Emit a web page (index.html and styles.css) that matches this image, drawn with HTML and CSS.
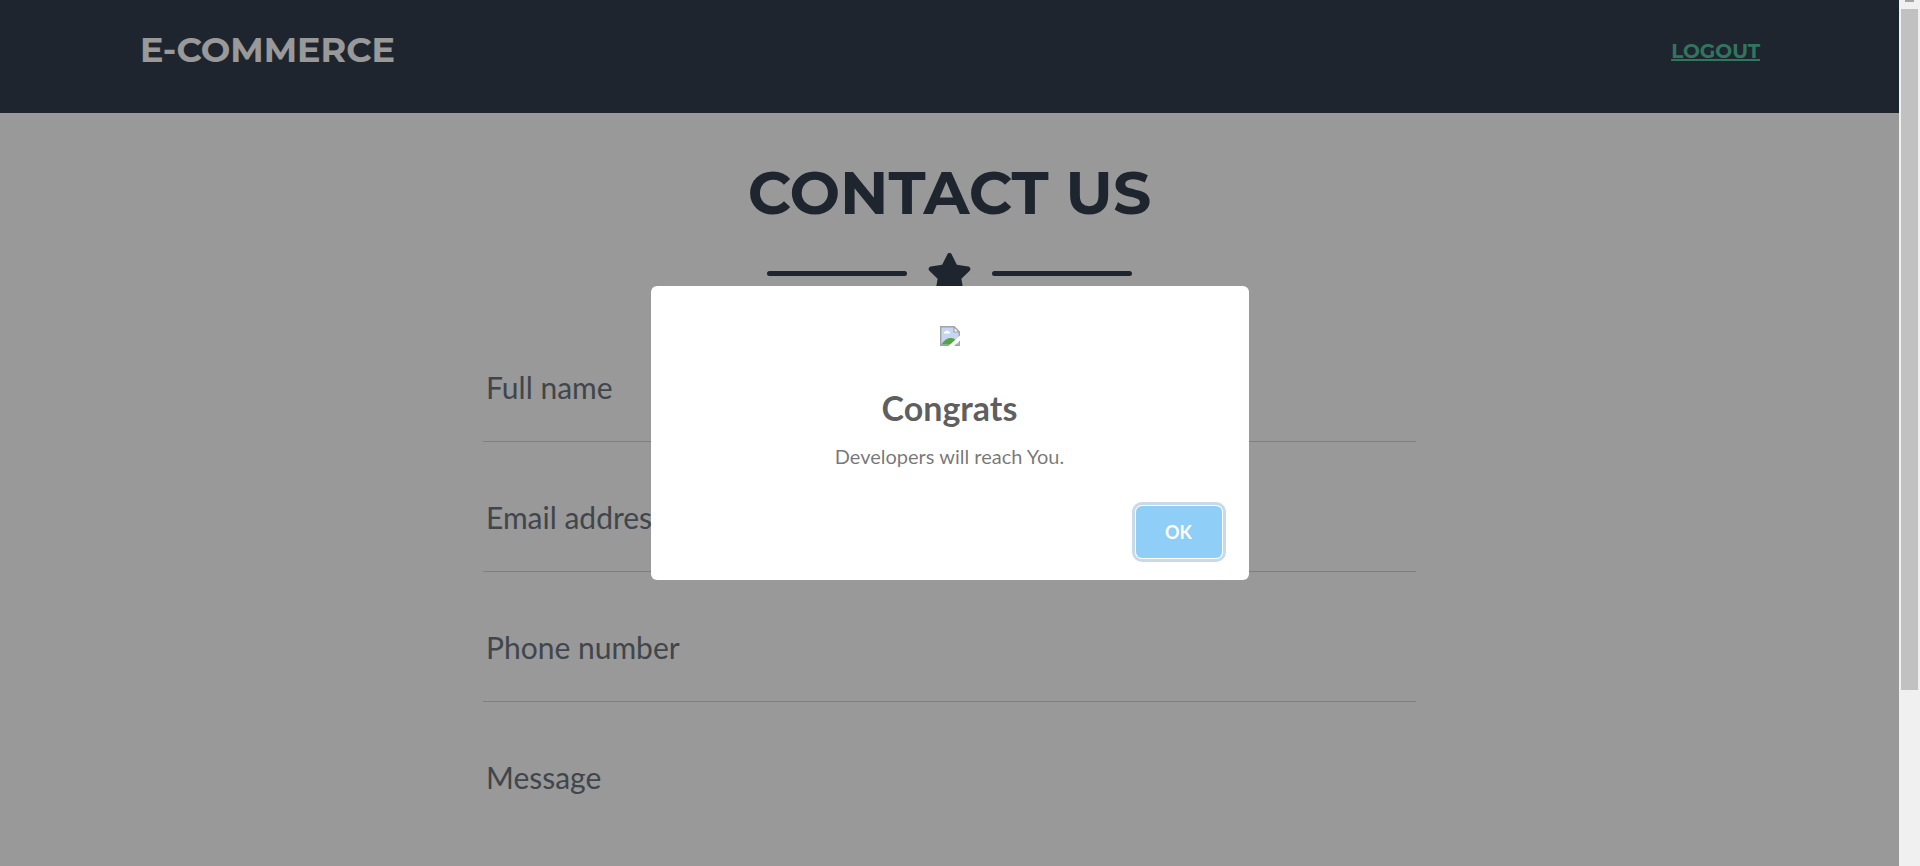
FILE: index.html
```
<!DOCTYPE html>
<html lang="en">
<head>
<meta charset="utf-8">
<meta name="viewport" content="width=device-width, initial-scale=1">
<title>Contact Us</title>
<link rel="stylesheet" href="styles.css">
</head>
<body>
<div class="viewport">
  <div class="page">
    <header class="navbar">
      <div class="navbar-inner">
        <span class="brand">E-COMMERCE</span>
        <a class="logout" href="#">LOGOUT</a>
      </div>
    </header>
    <main class="contact">
      <h1 class="contact-title">CONTACT US</h1>
      <div class="divider">
        <span class="divider-line"></span>
        <svg class="divider-star" viewBox="0 0 576 512" aria-hidden="true"><path fill="currentColor" d="M259.3 17.8L194 150.2 47.900 171.500c-26.200 3.800-36.700 36.100-17.700 54.600l105.700 103-25 145.500c-4.500 26.300 23.200 46 46.400 33.700L288 439.600l130.700 68.700c23.200 12.200 50.900-7.400 46.400-33.700l-25-145.500 105.700-103c19-18.500 8.500-50.800-17.700-54.600L382 150.200 316.700 17.800c-11.700-23.600-45.600-23.900-57.400 0z"/></svg>
        <span class="divider-line"></span>
      </div>
      <form class="form">
        <div class="field">
          <input class="control" type="text" aria-label="Full name" placeholder="Full name">
        </div>
        <div class="field">
          <input class="control" type="email" aria-label="Email address" placeholder="Email address">
        </div>
        <div class="field">
          <input class="control" type="tel" aria-label="Phone number" placeholder="Phone number">
        </div>
        <div class="field">
          <textarea class="control control-area" aria-label="Message" placeholder="Message"></textarea>
        </div>
      </form>
    </main>
    <div class="overlay">
      <div class="modal" role="dialog" aria-modal="true" aria-labelledby="modal-title">
        <svg class="modal-image" viewBox="0 0 20 20" role="img" aria-label="Missing image">
          <path d="M0.700 0.700H14L19.300 6V19.300H0.700z" fill="#c5d5f4" stroke="#a3a3a3" stroke-width="1.400"/>
          <path d="M4 7.500a1.500 1.500 0 0 1 1.500-2 2 2 0 0 1 3.500 0 1.300 1.300 0 0 1 1 2z" fill="#fff"/>
          <path d="M1.400 18.600C4 14 8 11.500 11.500 12c3 .3 5 2 6 6.600z" fill="#55a63f"/>
          <path d="M14 .7V6h5.300z" fill="#f5f5f5" stroke="#a3a3a3" stroke-width="1.200"/>
          <path d="M20 9.500L8.500 20H14L20 14.500z" fill="#fff"/>
        </svg>
        <h2 class="modal-title" id="modal-title">Congrats</h2>
        <p class="modal-text">Developers will reach You.</p>
        <div class="modal-footer">
          <button class="modal-button" type="button">OK</button>
        </div>
      </div>
    </div>
  </div>
  <div class="scrollbar" aria-hidden="true">
    <span class="scroll-arrow"></span>
    <span class="scroll-thumb"></span>
  </div>
</div>
</body>
</html>
```
FILE: styles.css
```
* { box-sizing: border-box; }
body {
  margin: 0;
  font-family: Lato, "Liberation Sans", sans-serif;
  color: #333f4d;
}
.viewport {
  display: flex;
  height: 100vh;
  overflow: hidden;
}
.page {
  position: relative;
  flex: 1;
  overflow: hidden;
  background: #fff;
}
.navbar {
  background: #333f4d;
  padding: 24px 139px 37px 140px;
}
.navbar-inner {
  display: flex;
  justify-content: space-between;
  align-items: center;
}
.brand, .logout, .contact-title {
  font-family: Montserrat, Inter, "Liberation Sans", sans-serif;
  font-weight: 700;
}
.brand {
  font-size: 35px;
  line-height: 52px;
  color: #fff;
}
.logout {
  padding-top: 2px;
  font-size: 20px;
  line-height: 30px;
  color: #52c49e;
  text-decoration: underline;
  text-decoration-thickness: 2px;
}
.contact {
  width: 933px;
  max-width: 100%;
  margin: 0 auto;
  padding-top: 44px;
}
.contact-title {
  margin: 0;
  font-size: 60px;
  line-height: 72px;
  text-align: center;
  white-space: nowrap;
}
.divider {
  display: flex;
  justify-content: center;
  align-items: center;
  gap: 20px;
  margin-top: 24px;
  height: 40px;
}
.divider-line {
  width: 140px;
  height: 5px;
  border-radius: 5px;
  background: #333f4d;
}
.divider-star {
  width: 45px;
  height: 40px;
}
.form { padding-top: 19px; }
.field {
  height: 130px;
  border-bottom: 1px solid #d0d4d8;
}
.field:last-child {
  height: 220px;
}
.control {
  display: block;
  width: 100%;
  height: 100%;
  padding: 20px 3px 0;
  border: 0;
  outline: 0;
  background: transparent;
  font: 400 30px/44px Lato, "Liberation Sans", sans-serif;
  color: #6c757d;
}
.control::placeholder {
  color: #6c757d;
  opacity: 1;
}
.control-area {
  padding-top: 53px;
  resize: none;
}
.overlay {
  position: absolute;
  inset: 0;
  display: flex;
  justify-content: center;
  align-items: center;
  background: rgba(0, 0, 0, 0.4);
}
.modal {
  display: flex;
  flex-direction: column;
  align-items: center;
  width: 598px;
  max-width: 90%;
  border-radius: 6px;
  background: #fff;
  padding-top: 40px;
}
.modal-image {
  width: 20px;
  height: 20px;
}
.modal-title {
  margin: 41px 0 0;
  font-size: 34px;
  line-height: 42px;
  font-weight: 700;
  color: rgba(0, 0, 0, 0.65);
}
.modal-text {
  margin: 14px 0 0;
  font-size: 20px;
  line-height: 26px;
  color: rgba(0, 0, 0, 0.55);
}
.modal-footer {
  display: flex;
  justify-content: flex-end;
  align-self: stretch;
  margin-top: 37px;
  padding: 0 27px 22px;
}
.modal-button {
  width: 86px;
  height: 52px;
  border: 0;
  border-radius: 6px;
  background: #8fcef6;
  box-shadow: 0 0 0 1px #fff, 0 0 0 4px #c8d9e8;
  color: #fff;
  font: 700 18px/24px Lato, "Liberation Sans", sans-serif;
}
.scrollbar {
  display: flex;
  flex-direction: column;
  align-items: center;
  width: 21px;
  background: #f0f0f0;
}
.scroll-arrow {
  width: 9px;
  height: 2px;
  background: #a3a3a3;
}
.scroll-thumb {
  width: 17px;
  height: 78.6%;
  margin-top: 7px;
  background: #c1c1c1;
}
```
